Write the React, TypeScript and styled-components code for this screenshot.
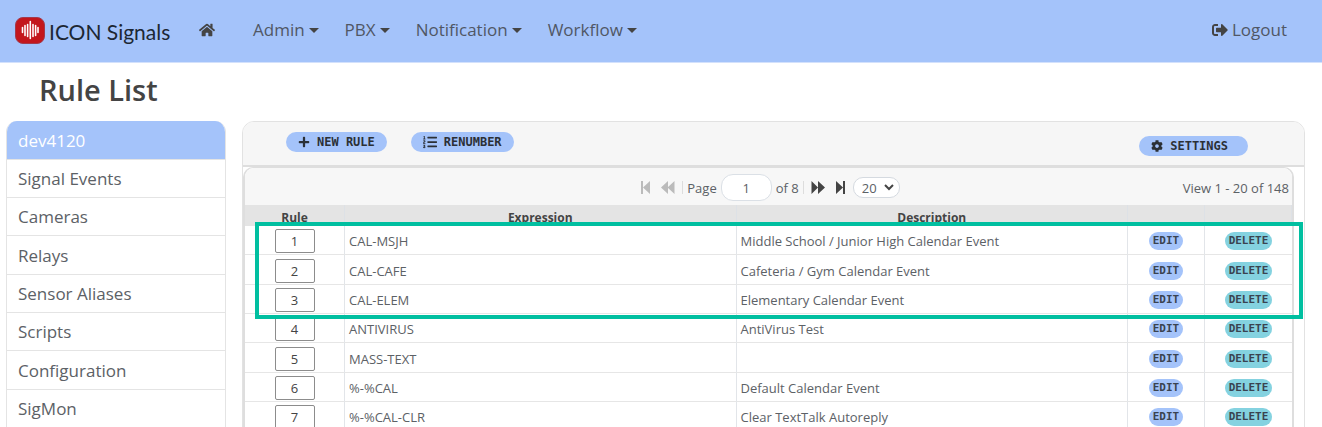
import React from "react";
import styled, { createGlobalStyle } from "styled-components";
import { FaCog, FaHome, FaListOl, FaPlus, FaSignOutAlt } from "react-icons/fa";

const GlobalStyle = createGlobalStyle`
  * { box-sizing: border-box; }
  body {
    margin: 0;
    background: #fff;
    color: #444;
    font-family: "Open Sans", "Noto Sans", sans-serif;
    font-size: 17px;
  }
  button, input, select { font: inherit; color: inherit; }
  html { overflow: hidden; }
`;

const Navbar = styled.header`
  display: flex;
  align-items: center;
  height: 63px;
  padding: 0 35px 2px 15px;
  background: #a4c3fa;
  border-bottom: 1px solid #d3e1fc;
`;

const Brand = styled.a`
  display: flex;
  align-items: flex-end;
  gap: 4px;
  width: 184px;
  color: #1c2733;
  font: 400 21px/24px Lato, sans-serif;
  text-decoration: none;
  white-space: nowrap;
`;

const NavLinks = styled.nav`
  display: flex;
  align-items: center;
  flex: 1;
`;

const NavLink = styled.a`
  display: flex;
  align-items: center;
  gap: 4px;
  color: #505765;
  line-height: 24px;
  text-decoration: none;
  svg { color: #444; }
`;

const HomeLink = styled(NavLink)`
  margin-right: 38px;
`;

const MenuButton = styled.button`
  display: flex;
  align-items: center;
  gap: 4px;
  margin-right: 26px;
  padding: 0;
  border: 0;
  background: none;
  color: #505765;
  line-height: 24px;
  &::after {
    content: "";
    border: 5px solid transparent;
    border-top-color: #444;
    border-bottom: 0;
  }
`;

const Title = styled.h1`
  margin: 0;
  padding: 7px 39px 11px;
  font-size: 29px;
  font-weight: 600;
  line-height: 40px;
`;

const Layout = styled.div`
  display: flex;
  align-items: flex-start;
  gap: 16px;
  padding: 0 17px 0 6px;
`;

const Sidebar = styled.nav`
  flex: 0 0 220px;
  border: 1px solid #e4e4e4;
  border-top: 0;
  border-radius: 11px 11px 0 0;
  overflow: hidden;
`;

const SideLink = styled.a<{ $active?: boolean }>`
  display: flex;
  align-items: center;
  height: 38px;
  padding: 0 11px;
  border-bottom: 1px solid #e4e4e4;
  background: ${(p) => (p.$active ? "#a4c3fa" : "#fff")};
  color: ${(p) => (p.$active ? "#fff" : "#5c6166")};
  text-decoration: none;
  &:nth-child(3n + 1) { height: 39px; }
`;

const Panel = styled.main`
  flex: 1;
  min-width: 0;
  border: 1px solid #e2e2e2;
  border-radius: 12px 12px 0 0;
`;

const Toolbar = styled.div`
  display: flex;
  align-items: center;
  gap: 24px;
  height: 45px;
  padding: 0 56px 4px 43px;
  background: #f6f6f6;
  border-bottom: 2px solid #dedede;
  border-radius: 11px 11px 0 0;
`;

const ToolButton = styled.button<{ $end?: boolean }>`
  display: flex;
  align-items: center;
  gap: 7px;
  height: 20px;
  padding: 0 12px;
  border: 0;
  border-radius: 10px;
  background: #a4c3fa;
  color: #2b3036;
  font: bold 12px/20px "DejaVu Sans Mono", monospace;
  ${(p) => p.$end && "margin-top: 8px; margin-left: auto; padding-right: 20px;"}
`;

const Grid = styled.section`
  position: relative;
  margin-right: 10px;
  border: 2px solid #dedede;
  border-top-width: 1px;
  border-bottom: 0;
  border-radius: 10px 10px 0 0;
`;

const Pager = styled.div`
  display: grid;
  grid-template-columns: 1fr auto 1fr;
  align-items: center;
  height: 37px;
  padding-top: 2px;
  background: #f7f7f7;
  border-radius: 9px 9px 0 0;
  color: #5c6166;
  font-size: 13px;
`;

const PagerControls = styled.div`
  grid-column: 2;
  display: flex;
  align-items: center;
  gap: 4px;
`;

const PagerButton = styled.button`
  display: flex;
  margin: 0 3px;
  padding: 0;
  border: 0;
  background: none;
  color: #444;
  &:disabled { color: #bbb; }
`;

const Divider = styled.span`
  width: 1px;
  height: 13px;
  background: #ddd;
`;

const PageLabel = styled.label`
  display: flex;
  align-items: center;
  gap: 4px;
`;

const PageInput = styled.input`
  width: 51px;
  height: 27px;
  padding: 0;
  border: 1px solid #dbe0e6;
  border-radius: 12px;
  background: #fff;
  text-align: center;
`;

const SizeBox = styled.span`
  display: grid;
  align-items: center;
  width: 47px;
  svg {
    grid-area: 1 / 1;
    justify-self: end;
    margin-right: 6px;
    pointer-events: none;
  }
`;

const SizeSelect = styled.select`
  grid-area: 1 / 1;
  appearance: none;
  height: 21px;
  padding: 0 8px;
  border: 1px solid #d5dae0;
  border-radius: 10px;
  background: #fff;
`;

const ViewInfo = styled.span`
  justify-self: end;
  padding-right: 3px;
`;

const Table = styled.table`
  width: 100%;
  table-layout: fixed;
  border-collapse: separate;
  border-spacing: 0;
  color: #5c6166;
  font-size: 13px;
`;

const HeadCell = styled.th<{ $width?: number }>`
  width: ${(p) => (p.$width ? `${p.$width}px` : "auto")};
  height: 21px;
  padding: 4px 0 0;
  background: #e4e4e4;
  border-right: 1px solid #dde1e6;
  color: #444;
  font-size: 12px;
  font-weight: 700;
  line-height: 17px;
`;

const Row = styled.tr`
  height: 29px;
  &:nth-child(3n + 2) { height: 30px; }
`;

const Cell = styled.td<{ $center?: boolean }>`
  padding: 2px 4px 0;
  border-right: 1px solid #e2e5e9;
  border-bottom: 1px solid #e6e6e6;
  line-height: 16px;
  text-align: ${(p) => (p.$center ? "center" : "left")};
  &:last-child { border-right: 0; }
`;

const RuleInput = styled.input`
  display: block;
  width: 40px;
  height: 24px;
  margin: 0 auto;
  padding: 0;
  border: 1px solid #8c8c8c;
  border-radius: 2px;
  background: #fff;
  color: #444;
  text-align: center;
`;

const RowButton = styled.button<{ $danger?: boolean }>`
  display: block;
  height: 18px;
  margin: 0 auto;
  padding: 0 4px;
  border: 0;
  border-radius: 9px;
  background: ${(p) => (p.$danger ? "#84d2e0" : "#a4c3fa")};
  color: #3a4350;
  font: bold 11px/18px "DejaVu Sans Mono", monospace;
`;

const Highlight = styled.div`
  position: absolute;
  top: 54px;
  left: 10px;
  right: -11px;
  height: 97px;
  border: 4px solid #00bfa0;
  pointer-events: none;
`;

const LogoMark = () => (
  <svg width="30" height="27" viewBox="0 0 30 27" aria-hidden="true">
    <rect x="0.5" y="0.5" width="29" height="26" rx="7.5" fill="#c3161c" stroke="#a33a4c" />
    <path
      d="M7.500 10.500v5M10 8.500v10M12.600 7.500v12M15.300 4.500v17M18 7.500v12M20.600 8.500v10M23 10.500v5"
      stroke="#fff"
      strokeWidth="1.6"
      strokeLinecap="round"
    />
  </svg>
);

const FirstIcon = () => (
  <svg width="11" height="13" viewBox="0 0 11 13" fill="currentColor" aria-hidden="true">
    <path d="M1 0h2v13H1zM10 0v13L3 6.5z" />
  </svg>
);

const LastIcon = () => (
  <svg width="11" height="13" viewBox="0 0 11 13" fill="currentColor" aria-hidden="true">
    <path d="M8 0h2v13H8zM1 0v13l7-6.5z" />
  </svg>
);

const PrevIcon = () => (
  <svg width="14" height="13" viewBox="0 0 14 13" fill="currentColor" aria-hidden="true">
    <path d="M7 0v13L0 6.5zM13.5 0v13L6.5 6.5z" />
  </svg>
);

const NextIcon = () => (
  <svg width="14" height="13" viewBox="0 0 14 13" fill="currentColor" aria-hidden="true">
    <path d="M0.500 0v13l6.500-6.500zM7 0v13l7-6.500z" />
  </svg>
);

const ChevronIcon = () => (
  <svg width="10" height="7" viewBox="0 0 10 7" fill="none" aria-hidden="true">
    <path d="M1 1l4 4 4-4" stroke="#444" strokeWidth="2" />
  </svg>
);

const menus = ["Admin", "PBX", "Notification", "Workflow"];

const sections = [
  "dev4120",
  "Signal Events",
  "Cameras",
  "Relays",
  "Sensor Aliases",
  "Scripts",
  "Configuration",
  "SigMon",
];

const rules = [
  ["CAL-MSJH", "Middle School / Junior High Calendar Event"],
  ["CAL-CAFE", "Cafeteria / Gym Calendar Event"],
  ["CAL-ELEM", "Elementary Calendar Event"],
  ["ANTIVIRUS", "AntiVirus Test"],
  ["MASS-TEXT", ""],
  ["%-%CAL", "Default Calendar Event"],
  ["%-%CAL-CLR", "Clear TextTalk Autoreply"],
];

export default function App() {
  return (
    <>
      <GlobalStyle />
      <Navbar>
        <Brand href="#">
          <LogoMark />
          ICON Signals
        </Brand>
        <NavLinks>
          <HomeLink href="#" aria-label="Home">
            <FaHome size={16} />
          </HomeLink>
          {menus.map((name) => (
            <MenuButton key={name} type="button">
              {name}
            </MenuButton>
          ))}
        </NavLinks>
        <NavLink href="#">
          <FaSignOutAlt size={16} />
          Logout
        </NavLink>
      </Navbar>
      <Title>Rule List</Title>
      <Layout>
        <Sidebar>
          {sections.map((name, i) => (
            <SideLink key={name} href="#" $active={i === 0}>
              {name}
            </SideLink>
          ))}
        </Sidebar>
        <Panel>
          <Toolbar>
            <ToolButton type="button">
              <FaPlus size={12} />
              NEW RULE
            </ToolButton>
            <ToolButton type="button">
              <FaListOl size={14} />
              RENUMBER
            </ToolButton>
            <ToolButton type="button" $end>
              <FaCog size={12} />
              SETTINGS
            </ToolButton>
          </Toolbar>
          <Grid>
            <Pager>
              <PagerControls>
                <PagerButton type="button" aria-label="First page" disabled>
                  <FirstIcon />
                </PagerButton>
                <PagerButton type="button" aria-label="Previous page" disabled>
                  <PrevIcon />
                </PagerButton>
                <Divider />
                <PageLabel>
                  Page
                  <PageInput defaultValue="1" />
                  of 8
                </PageLabel>
                <Divider />
                <PagerButton type="button" aria-label="Next page">
                  <NextIcon />
                </PagerButton>
                <PagerButton type="button" aria-label="Last page">
                  <LastIcon />
                </PagerButton>
                <SizeBox>
                  <SizeSelect aria-label="Rows per page" defaultValue="20">
                    <option>20</option>
                    <option>50</option>
                  </SizeSelect>
                  <ChevronIcon />
                </SizeBox>
              </PagerControls>
              <ViewInfo>View 1 - 20 of 148</ViewInfo>
            </Pager>
            <Table>
              <thead>
                <tr>
                  <HeadCell $width={100}>Rule</HeadCell>
                  <HeadCell>Expression</HeadCell>
                  <HeadCell>Description</HeadCell>
                  <HeadCell $width={77} aria-label="Edit" />
                  <HeadCell $width={87} aria-label="Delete" />
                </tr>
              </thead>
              <tbody>
                {rules.map(([expression, description], i) => (
                  <Row key={expression}>
                    <Cell $center>
                      <RuleInput defaultValue={i + 1} aria-label={`Order of ${expression}`} />
                    </Cell>
                    <Cell>{expression}</Cell>
                    <Cell>{description}</Cell>
                    <Cell $center>
                      <RowButton type="button">EDIT</RowButton>
                    </Cell>
                    <Cell $center>
                      <RowButton type="button" $danger>
                        DELETE
                      </RowButton>
                    </Cell>
                  </Row>
                ))}
              </tbody>
            </Table>
            <Highlight />
          </Grid>
        </Panel>
      </Layout>
    </>
  );
}
